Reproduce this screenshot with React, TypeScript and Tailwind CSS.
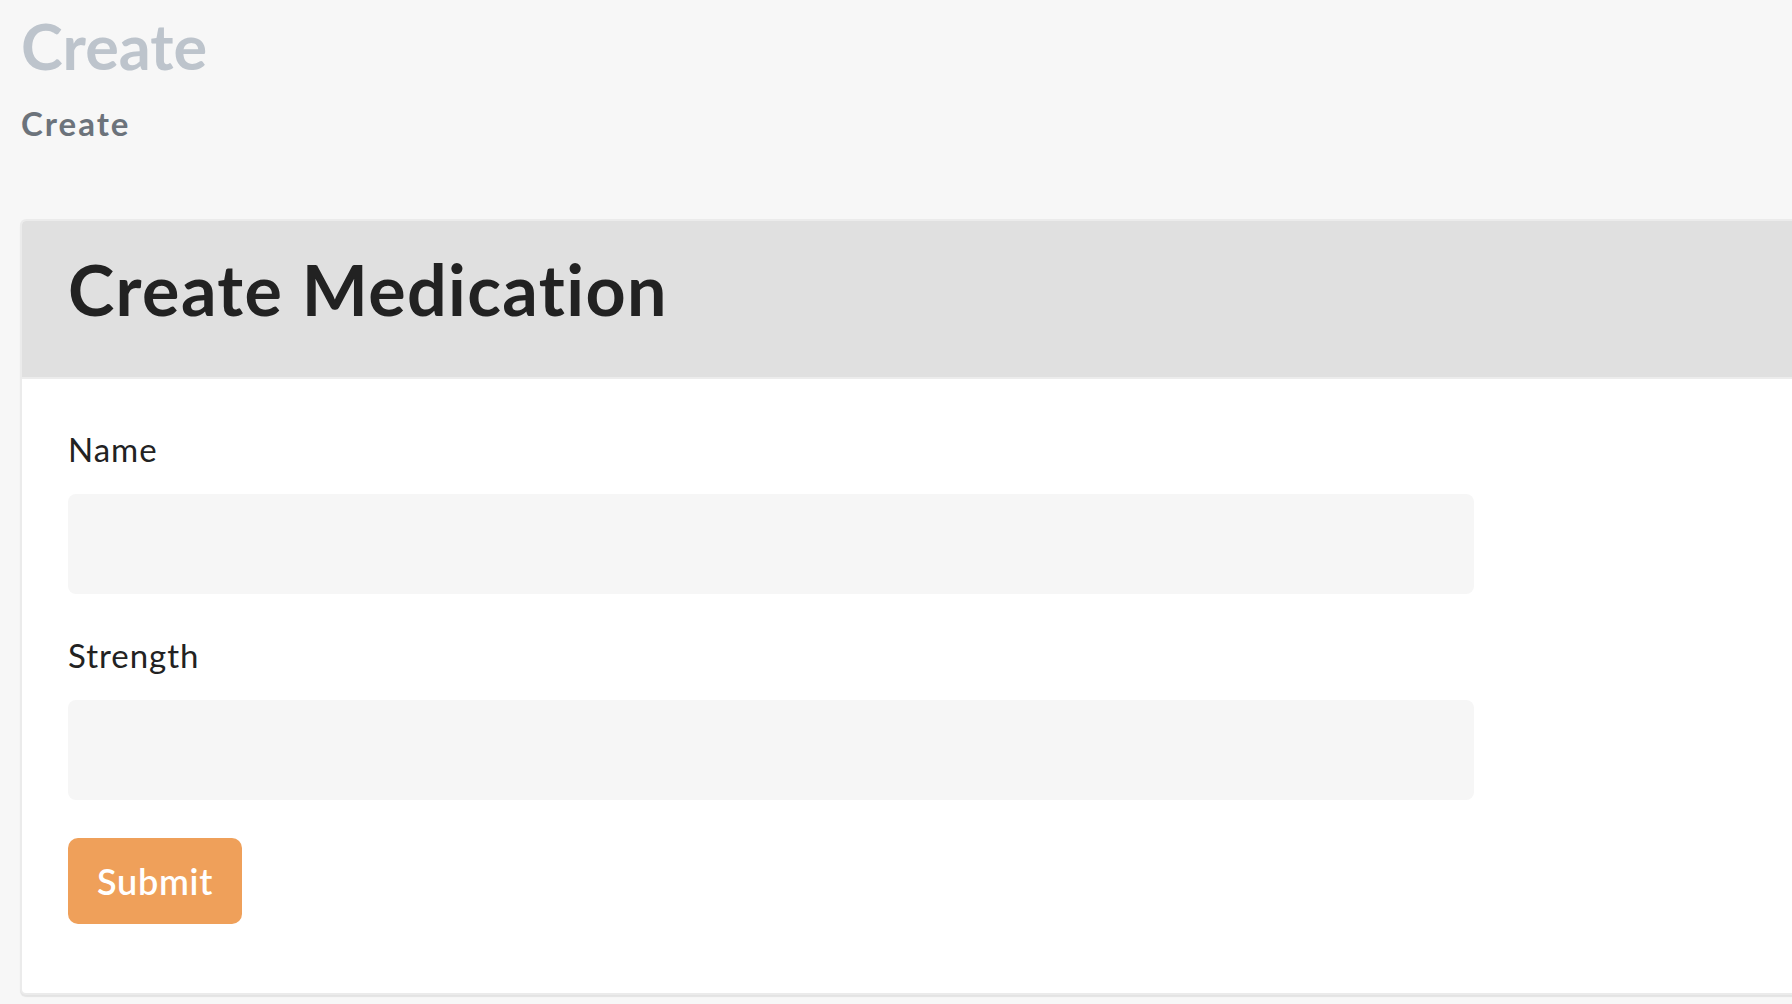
export default function App() {
  return (
    <div className="min-h-screen overflow-x-hidden bg-[#f7f7f7] pl-[20px] pt-[14px] pb-[12px] font-['Lato','Liberation_Sans',sans-serif] [font-variant-ligatures:no-common-ligatures]">
      <h1 className="pl-px text-[63px] font-bold leading-none text-[#bdc4cc]">Create</h1>
      <h2 className="mt-[30px] pl-px text-[33px] font-bold leading-none tracking-[0.06em] text-[#6c737b]">Create</h2>

      <div className="-mr-10 mt-[79px] overflow-hidden rounded-md border-2 border-[#ebebeb] bg-white shadow-[0_2px_1px_rgba(0,0,0,0.08)]">
        <div className="border-b-2 border-[#ececec] bg-[#e0e0e0] px-[46px] pt-[33px] pb-[53px]">
          <h3 className="text-[70px] font-bold leading-none tracking-[0.02em] text-[#222222]">Create Medication</h3>
        </div>

        <form className="px-[46px] pt-[54px] pb-[69px]" onSubmit={(e) => e.preventDefault()}>
          <label className="block text-[33px] leading-none tracking-[0.03em] text-[#222222]">Name</label>
          <input type="text" className="mt-[28px] block h-[100px] w-[1406px] rounded-lg bg-[#f6f6f6] px-6 text-[28px] outline-none" />

          <label className="mt-[45px] block text-[33px] leading-none tracking-[0.03em] text-[#222222]">Strength</label>
          <input type="text" className="mt-[28px] block h-[100px] w-[1406px] rounded-lg bg-[#f6f6f6] px-6 text-[28px] outline-none" />

          <button type="submit" className="mt-[38px] flex h-[86px] w-[174px] items-center justify-center rounded-[10px] bg-[#efa05a] text-[36px] font-semibold tracking-[0.02em] text-white">
            Submit
          </button>
        </form>
      </div>
    </div>
  );
}
